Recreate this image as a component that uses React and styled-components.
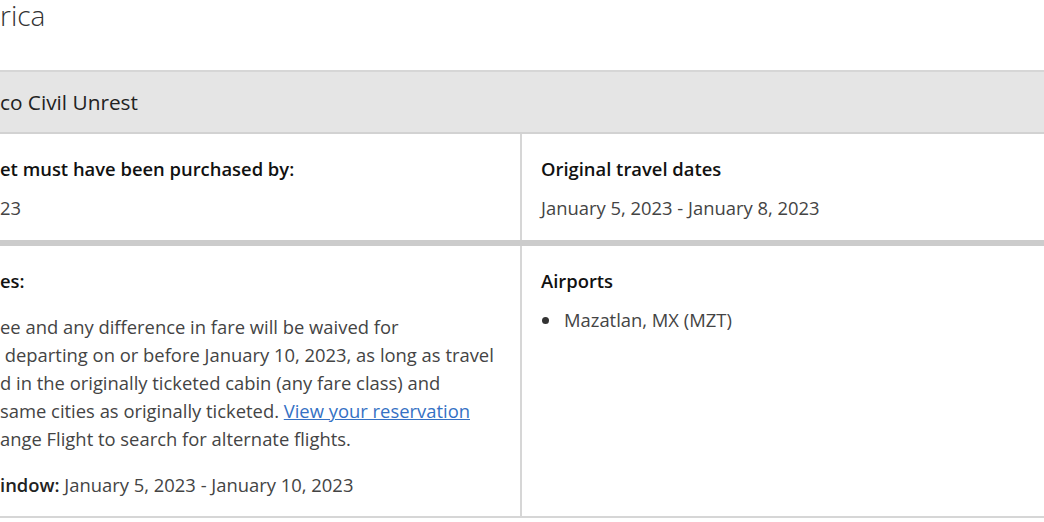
import React from 'react';
import styled, { createGlobalStyle } from 'styled-components';

const GlobalStyle = createGlobalStyle`
    html, body {
        margin: 0;
        padding: 0;
        background: #ffffff;
        overflow: hidden;
    }
    body {
        font-family: "Open Sans", "Noto Sans", "Liberation Sans", sans-serif;
        color: #3d3d3d;
        -webkit-font-smoothing: antialiased;
    }
`;

const alertInfo = {
    region: 'rica',
    title: 'co Civil Unrest',
    purchasedLabel: 'et must have been purchased by:',
    purchasedBy: '23',
    travelDates: 'January 5, 2023 - January 8, 2023',
    airports: ['Mazatlan, MX (MZT)'],
};

const TravelAlert = () => {
    return (
        <Page>
            <RegionTitle>{alertInfo.region}</RegionTitle>
            <AlertTable>
                {/* 알림 제목 */}
                <AlertHeader>{alertInfo.title}</AlertHeader>
                <AlertRow>
                    <Cell left>
                        <CellHeading>{alertInfo.purchasedLabel}</CellHeading>
                        <CellValue>{alertInfo.purchasedBy}</CellValue>
                    </Cell>
                    <Cell>
                        <CellHeading>Original travel dates</CellHeading>
                        <CellValue>{alertInfo.travelDates}</CellValue>
                    </Cell>
                </AlertRow>
                <AlertRow last>
                    <Cell left last>
                        <CellHeading>es:</CellHeading>
                        <PolicyText>
                            <Line>ee and any difference in fare will be waived for</Line>
                            <Line>{'\u00a0'}departing on or before January 10, 2023, as long as travel</Line>
                            <Line>d in the originally ticketed cabin (any fare class) and</Line>
                            <Line>
                                same cities as originally ticketed.{' '}
                                <ReservationLink href="#">View your reservation</ReservationLink>
                            </Line>
                            <Line>ange Flight to search for alternate flights.</Line>
                        </PolicyText>
                        <WindowText>
                            <strong>indow:</strong> January 5, 2023 - January 10, 2023
                        </WindowText>
                    </Cell>
                    <Cell last>
                        <CellHeading>Airports</CellHeading>
                        <AirportList>
                            {alertInfo.airports.map((airport) => (
                                <AirportItem key={airport}>{airport}</AirportItem>
                            ))}
                        </AirportList>
                    </Cell>
                </AlertRow>
            </AlertTable>
        </Page>
    );
};

const App = () => (
    <>
        <GlobalStyle />
        <TravelAlert />
    </>
);

const Page = styled.div`
    width: 1044px;
    height: 522px;
    overflow: hidden;
`;

const RegionTitle = styled.h1`
    margin: -3px 0 0 0;
    height: 73px;
    font-size: 28px;
    line-height: 36px;
    font-weight: 300;
    color: #333333;
`;

const AlertTable = styled.div`
    border-top: 2px solid #d6d6d6;
    width: 1060px;
`;

const AlertHeader = styled.div`
    height: 60px;
    display: flex;
    align-items: center;
    background-color: #e5e5e5;
    border-bottom: 2px solid #d2d2d2;
    font-size: 20.8px;
    color: #222222;
`;

const AlertRow = styled.div`
    display: grid;
    grid-template-columns: 522px 1fr;
    border-bottom: ${({ last }) => (last ? '2px solid #d6d6d6' : '6px solid #cccccc')};
`;

const Cell = styled.div`
    padding: 23px 19px ${({ last }) => (last ? '17px' : '20px')} ${({ left }) => (left ? '0' : '19px')};
    border-right: ${({ left }) => (left ? '2px solid #d6d6d6' : 'none')};
    font-size: 18.4px;
`;

const CellHeading = styled.div`
    font-weight: 600;
    line-height: 24px;
    color: #111111;
    margin-bottom: 15px;
`;

const CellValue = styled.div`
    line-height: 24px;
    color: #444444;
`;

const PolicyText = styled.div`
    margin-top: 20px;
    line-height: 28px;
    color: #444444;
`;

const Line = styled.div`
    white-space: nowrap;
`;

const ReservationLink = styled.a`
    color: #3571c4;
    text-decoration: underline;
`;

const WindowText = styled.div`
    margin-top: 18px;
    line-height: 28px;
    color: #444444;
    strong {
        font-weight: 600;
        color: #222222;
    }
`;

const AirportList = styled.ul`
    list-style: none;
    margin: 0;
    padding: 0;
`;

const AirportItem = styled.li`
    display: flex;
    align-items: center;
    line-height: 24px;
    color: #444444;
    &::before {
        content: '';
        width: 7px;
        height: 7px;
        border-radius: 50%;
        background: #333333;
        margin: 0 15px 0 1px;
    }
`;

export default App;
